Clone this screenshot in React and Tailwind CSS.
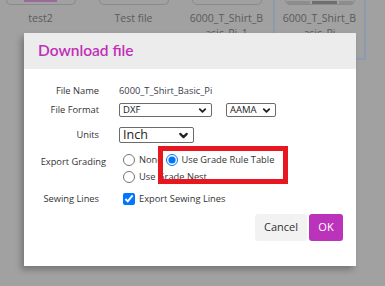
import { ChevronDown } from 'lucide-react';

const thumbs = [
  { lines: ['test2'], bar: true },
  { lines: ['Test file'] },
  { lines: ['6000_T_Shirt_B', 'asic_Pi_1'] },
  { lines: ['6000_T_Shirt_B', 'asic_Pi'], selected: true },
];

function Select({ value, className, textClass = 'text-[9.5px]', icon = 11 }) {
  return (
    <div
      className={`flex items-center justify-between border border-[#6b6b6b] rounded-[2px] bg-white pl-[3px] pr-[3px] ${className}`}
    >
      <span className={`${textClass} leading-none text-[#222]`}>{value}</span>
      <ChevronDown size={icon} strokeWidth={4} className="text-[#222]" />
    </div>
  );
}

function Label({ children, className = '' }) {
  return (
    <div className={`w-[75px] shrink-0 text-right whitespace-nowrap text-[9.3px] text-[#333] leading-none ${className}`}>
      {children}
    </div>
  );
}

export default function App() {
  return (
    <div
      className="relative w-[385px] h-[286px] overflow-hidden bg-[#a1a1a1]"
      style={{ fontFamily: '"Open Sans", "Noto Sans", sans-serif' }}
    >
      {/* page behind the overlay */}
      <div className="flex ml-[-6px]">
        {thumbs.map((t, i) => (
          <div key={i} className="w-[93px] shrink-0 flex flex-col items-center">
            <div
              className={`w-[93px] h-[60px] flex flex-col items-center ${t.selected ? 'border-x-2 border-b-2 border-[#8c9bb0]' : ''}`}
            >
              <div className="w-[70px] h-[5px] border-x border-b border-[#8a8a8a] rounded-b-[6px] flex justify-center">
                {t.bar && <div className="w-[33px] h-[2px] bg-[#9a6a9a]" />}
                {t.selected && (
                  <div className="w-[66px] h-[3px] mt-[1px] flex gap-[2px]">
                    <div className="w-[24px] bg-[#8d8d8d]" />
                    <div className="w-[26px] bg-[#6e6e6e]" />
                    <div className="w-[14px] bg-[#8d8d8d]" />
                  </div>
                )}
              </div>
              <div className="mt-[6px] text-center text-[10.5px] leading-[15px] text-[#5b5b5b]">
                {t.lines.map((l) => (
                  <div key={l}>{l}</div>
                ))}
              </div>
            </div>
          </div>
        ))}
      </div>

      {/* dialog */}
      <div className="absolute left-[24px] top-[33px] w-[332px] h-[233px] bg-white shadow-[-3px_4px_6px_rgba(0,0,0,0.25)] flex flex-col">
        <div className="h-[36px] bg-[#ececec] flex items-center pl-[14px]">
          <h1
            className="text-[15.5px] font-semibold text-[#c12fb9] leading-none"
            style={{ fontFamily: 'Lato, "Noto Sans", sans-serif' }}
          >
            Download file
          </h1>
        </div>

        <div className="flex flex-col pt-[15px]">
          <div className="flex items-center h-[14px] gap-[20px]">
            <Label>File Name</Label>
            <span className="text-[9.3px] leading-none text-[#3a3a4a]">6000_T_Shirt_Basic_Pi</span>
          </div>

          <div className="flex items-center h-[14px] mt-[5px]">
            <Label>File Format</Label>
            <Select value="DXF" className="w-[93px] h-[14px] ml-[20px]" />
            <Select value="AAMA" className="w-[50px] h-[14px] ml-[14px]" />
          </div>

          <div className="flex items-center h-[16px] gap-[20px] mt-[10px]">
            <Label>Units</Label>
            <Select value="Inch" textClass="text-[12.5px]" icon={13} className="w-[75px] h-[16px]" />
          </div>

          <div className="flex gap-[24px] mt-[11px]">
            <Label className="pt-[3px]">
              <span className="mr-[-7px]">Export Grading</span>
            </Label>
            <div className="flex flex-col gap-[5px] text-[9.3px] leading-none text-[#333]">
              <div className="flex items-center">
                <label className="flex items-center gap-[4px]">
                  <input type="radio" name="grading" className="m-0 w-[12px] h-[12px]" />
                  None
                </label>
                <label className="flex items-center gap-[4px] ml-[3px]">
                  <input type="radio" name="grading" defaultChecked className="m-0 w-[12px] h-[12px]" />
                  Use Grade Rule Table
                </label>
              </div>
              <label className="flex items-center gap-[4px]">
                <input type="radio" name="grading" className="m-0 w-[12px] h-[12px]" />
                Use Grade Nest
              </label>
            </div>
          </div>

          <div className="flex items-center gap-[24px] mt-[10px]">
            <Label>Sewing Lines</Label>
            <label className="flex items-center gap-[4px] text-[9.3px] leading-none text-[#333]">
              <input type="checkbox" defaultChecked className="m-0 w-[12px] h-[12px]" />
              Export Sewing Lines
            </label>
          </div>
        </div>

        <div className="flex justify-end gap-[2px] pr-[13px] mt-[9px]">
          <button className="w-[52px] h-[27px] rounded-[3px] bg-[#f2f2f2] text-[11px] text-[#333]">Cancel</button>
          <button className="w-[34px] h-[27px] rounded-[3px] bg-[#bb33bb] text-[11px] text-white">OK</button>
        </div>
      </div>

      {/* annotation box */}
      <div className="absolute left-[158px] top-[146px] w-[130px] h-[38px] border-[5px] border-[#e8161f]" />
    </div>
  );
}
